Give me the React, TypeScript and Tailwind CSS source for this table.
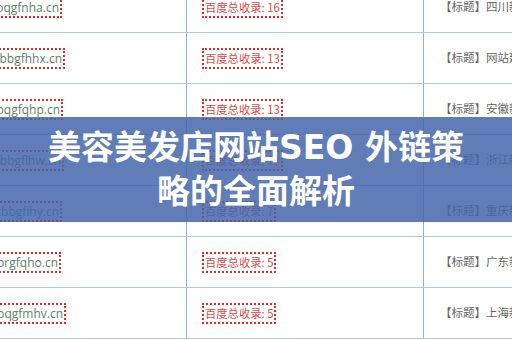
import React from "react";

type Row = { domain: string; end: number; count: number; title: string };

const rows: Row[] = [
  { domain: "www.zxbqgfnha.cn", end: 62, count: 16, title: "【标题】四川新闻网站" },
  { domain: "www.zxbbgfhhx.cn", end: 65, count: 13, title: "【标题】网站建设优化" },
  { domain: "www.zxbqgfqhp.cn", end: 63, count: 13, title: "【标题】安徽新闻网站" },
  { domain: "www.zxbbgflhw.cn", end: 64, count: 13, title: "【标题】浙江新闻网站" },
  { domain: "www.zxbbgflhy.cn", end: 62, count: 7, title: "【标题】重庆新闻网站" },
  { domain: "www.zxbrgfqho.cn", end: 61, count: 5, title: "【标题】广东新闻网站" },
  { domain: "www.zxbqgfmhv.cn", end: 66, count: 5, title: "【标题】上海新闻网站" },
];

export default function App() {
  return (
    <div
      className="relative w-[512px] h-[340px] overflow-hidden bg-white"
      style={{ fontFamily: '"Open Sans", "Noto Sans CJK SC", sans-serif' }}
    >
      <div className="mt-[-18px] flex flex-col">
        {rows.map((r, i) => (
          <div key={i} className="grid grid-cols-[187px_237px_1fr] h-[51px] border-b border-[#adc9e6]">
            <div className="border-r border-[#8db2da] flex items-center overflow-visible">
              <div className="flex justify-end" style={{ width: r.end }}>
                <span className="shrink-0 whitespace-nowrap border-2 border-dotted border-[#e02a2a] px-[1px] text-[12px] leading-[17px] text-[#5f806d]">
                  {r.domain}
                </span>
              </div>
            </div>
            <div className="border-r border-[#8db2da] flex items-center pl-[15px]">
              <span
                className="whitespace-nowrap border-2 border-dotted border-[#e02a2a] px-[1px] text-[11.3px] leading-[17px] text-[#dc4a4a]"
                style={{ fontFamily: '"Noto Sans CJK SC", sans-serif' }}
              >
                百度总收录: {r.count}
              </span>
            </div>
            <div className="flex items-center pl-[16px] overflow-hidden">
              <span
                className="whitespace-nowrap text-[11.5px] text-[#666666]"
                style={{ fontFamily: '"Noto Sans CJK SC", sans-serif' }}
              >
                {r.title}
              </span>
            </div>
          </div>
        ))}
      </div>
      <div className="absolute left-0 right-0 top-[117px] h-[105px] bg-[#4466ab]/85 flex items-center justify-center">
        <div
          className="text-center text-white font-bold text-[33px] leading-[44px] whitespace-nowrap"
          style={{ fontFamily: '"DejaVu Sans", "Noto Sans CJK SC", sans-serif' }}
        >
          美容美发店网站SEO 外链策
          <br />
          略的全面解析
        </div>
      </div>
    </div>
  );
}
